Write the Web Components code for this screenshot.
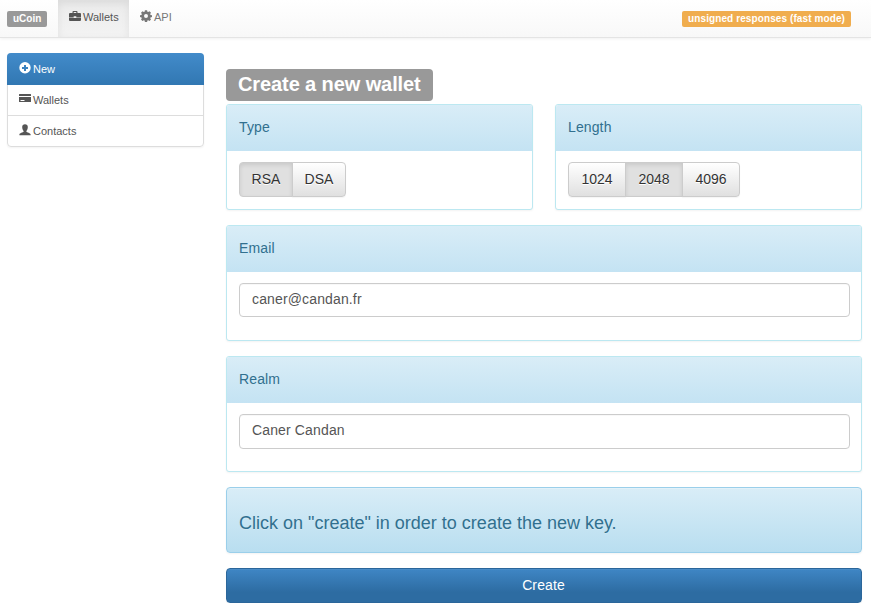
<!DOCTYPE html>
<html lang="en">
<head>
<meta charset="utf-8">
<title>uCoin</title>
<style>
  body { margin: 0; background: #fff; color: #333; font: 14px/20px "Liberation Sans", Arial, sans-serif; }
</style>
</head>
<body>
<wallet-app></wallet-app>
<script>
const icons = {
  briefcase: '<path fill-rule="evenodd" d="M3.5 3V1.9Q3.5 1 4.4 1h3.2q.9 0 .9.9V3H11q1 0 1 1v2.900H7.300V6.300H4.700v.6H0V4q0-1 1-1zM4.700 3h2.600v-.9H4.700z"/><path d="M0 7.400h4.700V8h2.600v-.6H12V10q0 1-1 1H1q-1 0-1-1z"/>',
  cog: '<path fill-rule="evenodd" d="M4.900.3h2.200l.3 1.500.8.3 1.300-.8 1.500 1.500-.8 1.300.3.8 1.500.3v1.900l-1.500.3-.3.8.8 1.300-1.500 1.500-1.300-.8-.8.3-.3 1.500H4.900l-.3-1.500-.8-.3-1.300.8L1 9.500l.8-1.300-.3-.8L0 7.100V5.200l1.500-.3.3-.8L1 2.800l1.500-1.500 1.300.8.8-.3zM6 4.100a2 2 0 1 0 0 4 2 2 0 0 0 0-4z"/>',
  plus: '<path fill-rule="evenodd" d="M6 0a5.700 5.700 0 1 0 0 11.400A5.700 5.700 0 0 0 6 0zM5 3h2v2h2v2H7v2H5V7H3V5h2z"/>',
  card: '<path fill-rule="evenodd" d="M.5 1h11q.5 0 .5.5V3H0V1.500Q0 1 .5 1zM0 4h12v4.500q0 .5-.5.5H.5Q0 9 0 8.500zM1.500 7v1h4V7z"/>',
  user: '<path d="M6 .2c1.700 0 2.800 1 2.800 2.800 0 1.700-.6 3-1.400 3.900v.8c.5.7 4.200 1.300 4.200 2.600v.9H.4v-.9c0-1.300 3.700-1.900 4.200-2.600v-.8C3.800 6 3.200 4.700 3.200 3 3.200 1.200 4.300.2 6 .2z"/>'
};
const define = (name, render) => customElements.define(name, class extends HTMLElement {
  constructor() {
    super();
    this.attachShadow({ mode: 'open' });
  }
  connectedCallback() {
    this.shadowRoot.innerHTML = '<style>*{box-sizing:border-box}:host{box-sizing:border-box}</style>' + render(this);
  }
});

define('glyph-icon', el => `<style>:host{display:block;width:12px;height:12px;flex:none}svg{display:block}</style>
  <svg width="12" height="12" viewBox="0 0 12 12" fill="currentColor">${icons[el.getAttribute('name')]}</svg>`);

define('tag-label', () => `<style>
  :host{display:block;width:fit-content;background:#999;color:#fff;font-weight:bold;font-size:10px;line-height:16px;height:16px;padding:0 6px;border-radius:2px;white-space:nowrap}
  :host([tone=warning]){background:#f0ad4e;letter-spacing:.1px}
  :host([large]){font-size:20px;line-height:31px;height:32px;padding:0 12px;border-radius:4px;letter-spacing:-.1px}
  </style><slot></slot>`);

define('nav-tab', el => `<style>
  :host{display:flex;height:37px;padding:11px 11px 0;gap:2px;font-size:11px;line-height:13px;color:#777;white-space:nowrap}
  :host([active]){width:71px;color:#555;background:linear-gradient(#ebebeb,#f3f3f3);box-shadow:inset 0 3px 9px rgba(0,0,0,.075)}
  glyph-icon{margin-top:-1px}
  </style><glyph-icon name="${el.getAttribute('icon')}"></glyph-icon><slot></slot>`);

define('nav-bar', () => `<style>
  :host{display:flex;align-items:flex-start;height:38px;padding:0 20px 0 7px;background:linear-gradient(#fff,#f8f8f8);border-bottom:1px solid #e4e4e4;box-shadow:0 1px 3px rgba(0,0,0,.06)}
  tag-label{margin-top:11px}.brand{width:40px}.tabs{display:flex;margin-left:11px}.mode{margin-left:auto}
  </style><tag-label class="brand">uCoin</tag-label><div class="tabs"><slot></slot></div><tag-label class="mode" tone="warning">unsigned responses (fast mode)</tag-label>`);

define('side-item', el => `<style>
  :host{display:flex;height:31px;padding:8px 11px 0;gap:2px;font-size:11px;line-height:15px;color:#555;border-bottom:1px solid #ddd}
  :host(:last-child){border-bottom:0}
  :host([active]){height:32px;margin:-1px -1px 0;padding:9px 12px 0;color:#fff;background:linear-gradient(#428bca,#3278b3);border-bottom:1px solid #3278b3;border-radius:4px 4px 0 0}
  </style><glyph-icon name="${el.getAttribute('icon')}"></glyph-icon><slot></slot>`);

define('side-menu', () => `<style>
  :host{display:block;width:197px;height:94px;border:1px solid #ddd;border-radius:4px;box-shadow:0 1px 2px rgba(0,0,0,.05)}
  </style><slot></slot>`);

define('info-panel', el => `<style>
  :host{display:block;border:1px solid #bce8f1;border-radius:3px;box-shadow:0 1px 2px rgba(0,0,0,.05);background:#fff}
  header{height:46px;padding:12px 12px 0;color:#31708f;letter-spacing:.12px;background:linear-gradient(#d9edf7,#c4e3f3);border-radius:2px 2px 0 0}
  .body{padding:11px 11px 0 12px}
  </style><header>${el.getAttribute('heading')}</header><div class="body"><slot></slot></div>`);

define('text-field', el => `<style>
  :host{display:block}
  input{display:block;width:100%;height:var(--field-height,34px);padding:0 12px var(--field-drop,2px);border:1px solid #ccc;border-radius:4px;outline:0;background:#fff;color:#555;font:inherit;letter-spacing:.14px;box-shadow:inset 0 1px 1px rgba(0,0,0,.03)}
  </style><input value="${el.getAttribute('value')}">`);

define('choice-group', el => {
  const selected = el.getAttribute('selected');
  const buttons = el.getAttribute('options').split(' ').map(o => `<button class="${o === selected ? 'on' : ''}">${o}</button>`).join('');
  return `<style>
  :host{display:flex;height:35px}
  button{width:var(--choice-width,58px);height:35px;margin:0 0 0 -1px;padding:0 0 1px;border:1px solid #ccc;font:inherit;color:#333;background:linear-gradient(#fff,#e0e0e0);text-shadow:0 1px 0 #fff;box-shadow:inset 0 1px 0 rgba(255,255,255,.15),0 1px 1px rgba(0,0,0,.045)}
  button:first-of-type{margin:0;border-radius:4px 0 0 4px}
  button:last-of-type{border-radius:0 4px 4px 0}
  .on{background:#e0e0e0;box-shadow:inset 0 2px 4px rgba(0,0,0,.1)}
  </style>${buttons}`;
});

define('info-alert', () => `<style>
  :host{display:block;height:66px;padding:25px 12px 0;border:1px solid #9acfea;border-radius:4px;color:#31708f;font-size:18px;line-height:20px;background:linear-gradient(#d9edf7,#b9def0);box-shadow:inset 0 1px 0 rgba(255,255,255,.25),0 1px 2px rgba(0,0,0,.05);text-shadow:0 1px 0 rgba(255,255,255,.2)}
  </style><slot></slot>`);

define('primary-button', () => `<style>
  :host{display:block}
  button{display:block;width:100%;height:35px;padding:0 1px 1px 0;border:1px solid #2b669a;border-radius:4px;color:#fff;font:inherit;letter-spacing:.12px;background:linear-gradient(#3f86c5,#2d6ca2 70%);box-shadow:inset 0 1px 0 rgba(255,255,255,.05),0 1px 1px rgba(0,0,0,.075)}
  </style><button><slot></slot></button>`);

define('wallet-app', () => `<style>
  :host{display:block}
  .layout{display:grid;grid-template-columns:197px 636px;column-gap:22px;padding:15px 0 0 7px;align-items:start}
  main{padding-top:16px}
  .row{display:grid;grid-template-columns:307px 307px;column-gap:22px;margin:3px 0 15px}
  .row info-panel{height:106px}
  .field{height:116px;margin-bottom:15px}
  info-alert{margin-bottom:15px}
  .type{--choice-width:54px}
  .realm{--field-height:35px;--field-drop:3px}
  </style>
  <nav-bar><nav-tab icon="briefcase" active>Wallets</nav-tab><nav-tab icon="cog">API</nav-tab></nav-bar>
  <div class="layout">
    <side-menu><side-item icon="plus" active>New</side-item><side-item icon="card">Wallets</side-item><side-item icon="user">Contacts</side-item></side-menu>
    <main>
      <tag-label large>Create a new wallet</tag-label>
      <div class="row">
        <info-panel heading="Type"><choice-group class="type" options="RSA DSA" selected="RSA"></choice-group></info-panel>
        <info-panel heading="Length"><choice-group options="1024 2048 4096" selected="2048"></choice-group></info-panel>
      </div>
      <info-panel class="field" heading="Email"><text-field value="caner@candan.fr"></text-field></info-panel>
      <info-panel class="field realm" heading="Realm"><text-field value="Caner Candan"></text-field></info-panel>
      <info-alert>Click on "create" in order to create the new key.</info-alert>
      <primary-button>Create</primary-button>
    </main>
  </div>`);
</script>
</body>
</html>
